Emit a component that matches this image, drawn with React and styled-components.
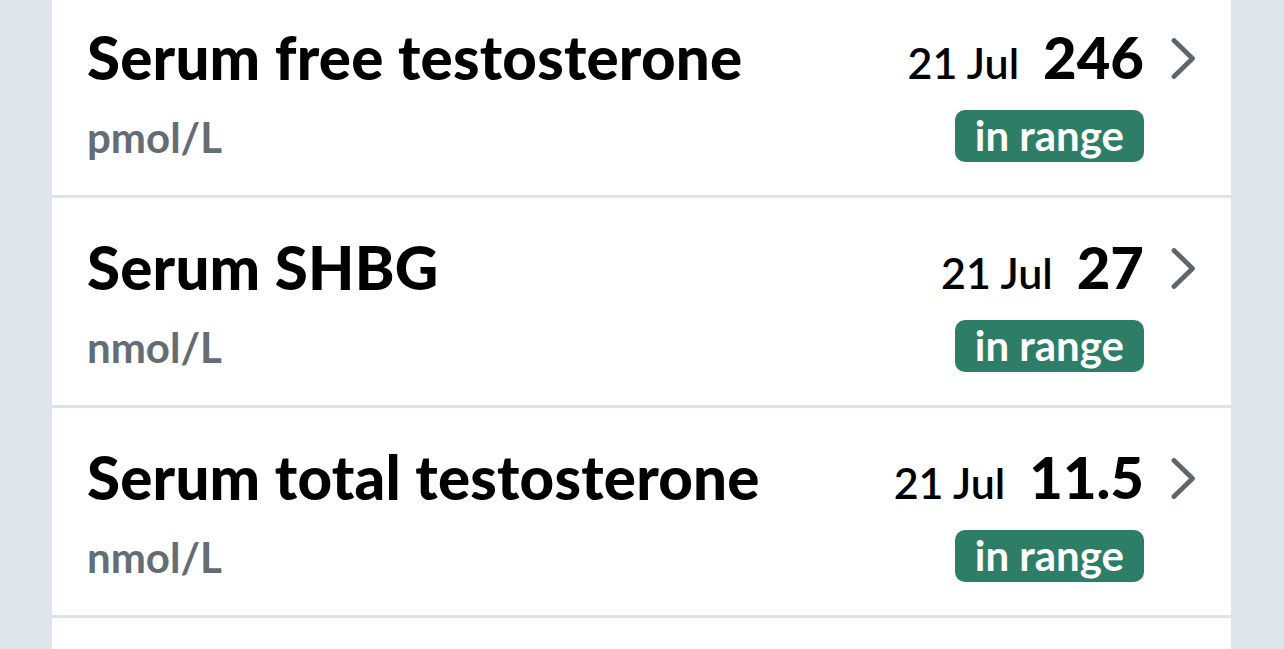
import React from "react";
import styled, { createGlobalStyle } from "styled-components";

const GlobalStyle = createGlobalStyle`
  html, body {
    margin: 0;
    padding: 0;
    background: #dde4eb;
    font-family: Lato, "Noto Sans", sans-serif;
    overflow: hidden;
  }
`;

const Page = styled.div`
  display: flex;
  justify-content: center;
  height: 649px;
  overflow: hidden;
`;

const Panel = styled.div`
  width: 1179px;
  margin-left: -1px;
  margin-top: -12px;
  background: #ffffff;
  display: flex;
  flex-direction: column;
`;

const Row = styled.div`
  display: flex;
  justify-content: space-between;
  align-items: flex-start;
  height: 210px;
  box-sizing: border-box;
  padding: 0 35px;
  border-bottom: 3px solid #dce5ea;
  flex-shrink: 0;
`;

const Left = styled.div`
  display: flex;
  flex-direction: column;
`;

const Title = styled.div`
  font-size: 60px;
  line-height: 72px;
  font-weight: 900;
  letter-spacing: 0.2px;
  color: #000;
  margin-top: 33px;
`;

const Unit = styled.div`
  font-size: 42px;
  line-height: 50px;
  font-weight: 700;
  color: #646c74;
  margin-top: 19px;
`;

const Right = styled.div`
  display: flex;
  align-items: flex-start;
  gap: 27px;
`;

const ValueCol = styled.div`
  display: flex;
  flex-direction: column;
  align-items: flex-end;
`;

const Reading = styled.div`
  display: flex;
  align-items: baseline;
  gap: 24px;
  height: 72px;
  margin-top: 33px;
  line-height: 72px;
`;

const DateText = styled.span`
  font-size: 43px;
  font-weight: 600;
  color: #000;
`;

const Value = styled.span`
  font-size: 58px;
  font-weight: 900;
  color: #000;
`;

const Badge = styled.span`
  display: inline-flex;
  align-items: center;
  justify-content: center;
  box-sizing: border-box;
  height: 52px;
  padding: 0 20px 2px;
  margin-top: 17px;
  border-radius: 10px;
  background: #2e7d67;
  color: #ffffff;
  font-size: 42px;
  font-weight: 700;
`;

const Chevron = styled.svg`
  width: 25px;
  height: 41px;
  margin-top: 50px;
  flex-shrink: 0;
`;

const results = [
  { name: "Serum free testosterone", unit: "pmol/L", date: "21 Jul", value: "246" },
  { name: "Serum SHBG", unit: "nmol/L", date: "21 Jul", value: "27" },
  { name: "Serum total testosterone", unit: "nmol/L", date: "21 Jul", value: "11.5" },
];

function ResultRow({ item }) {
  return (
    <Row>
      <Left>
        <Title>{item.name}</Title>
        <Unit>{item.unit}</Unit>
      </Left>
      <Right>
        <ValueCol>
          <Reading>
            <DateText>{item.date}</DateText>
            <Value>{item.value}</Value>
          </Reading>
          <Badge>in range</Badge>
        </ValueCol>
        <Chevron viewBox="0 0 25 41" fill="none">
          <path
            d="M3 2.5 L21.5 20.5 L3 38.5"
            stroke="#5d656e"
            strokeWidth="4.8"
            strokeLinecap="round"
            strokeLinejoin="round"
          />
        </Chevron>
      </Right>
    </Row>
  );
}

export default function App() {
  return (
    <>
      <GlobalStyle />
      <Page>
        <Panel>
          {results.map((item, i) => (
            <ResultRow key={i} item={item} />
          ))}
          <Row />
        </Panel>
      </Page>
    </>
  );
}
